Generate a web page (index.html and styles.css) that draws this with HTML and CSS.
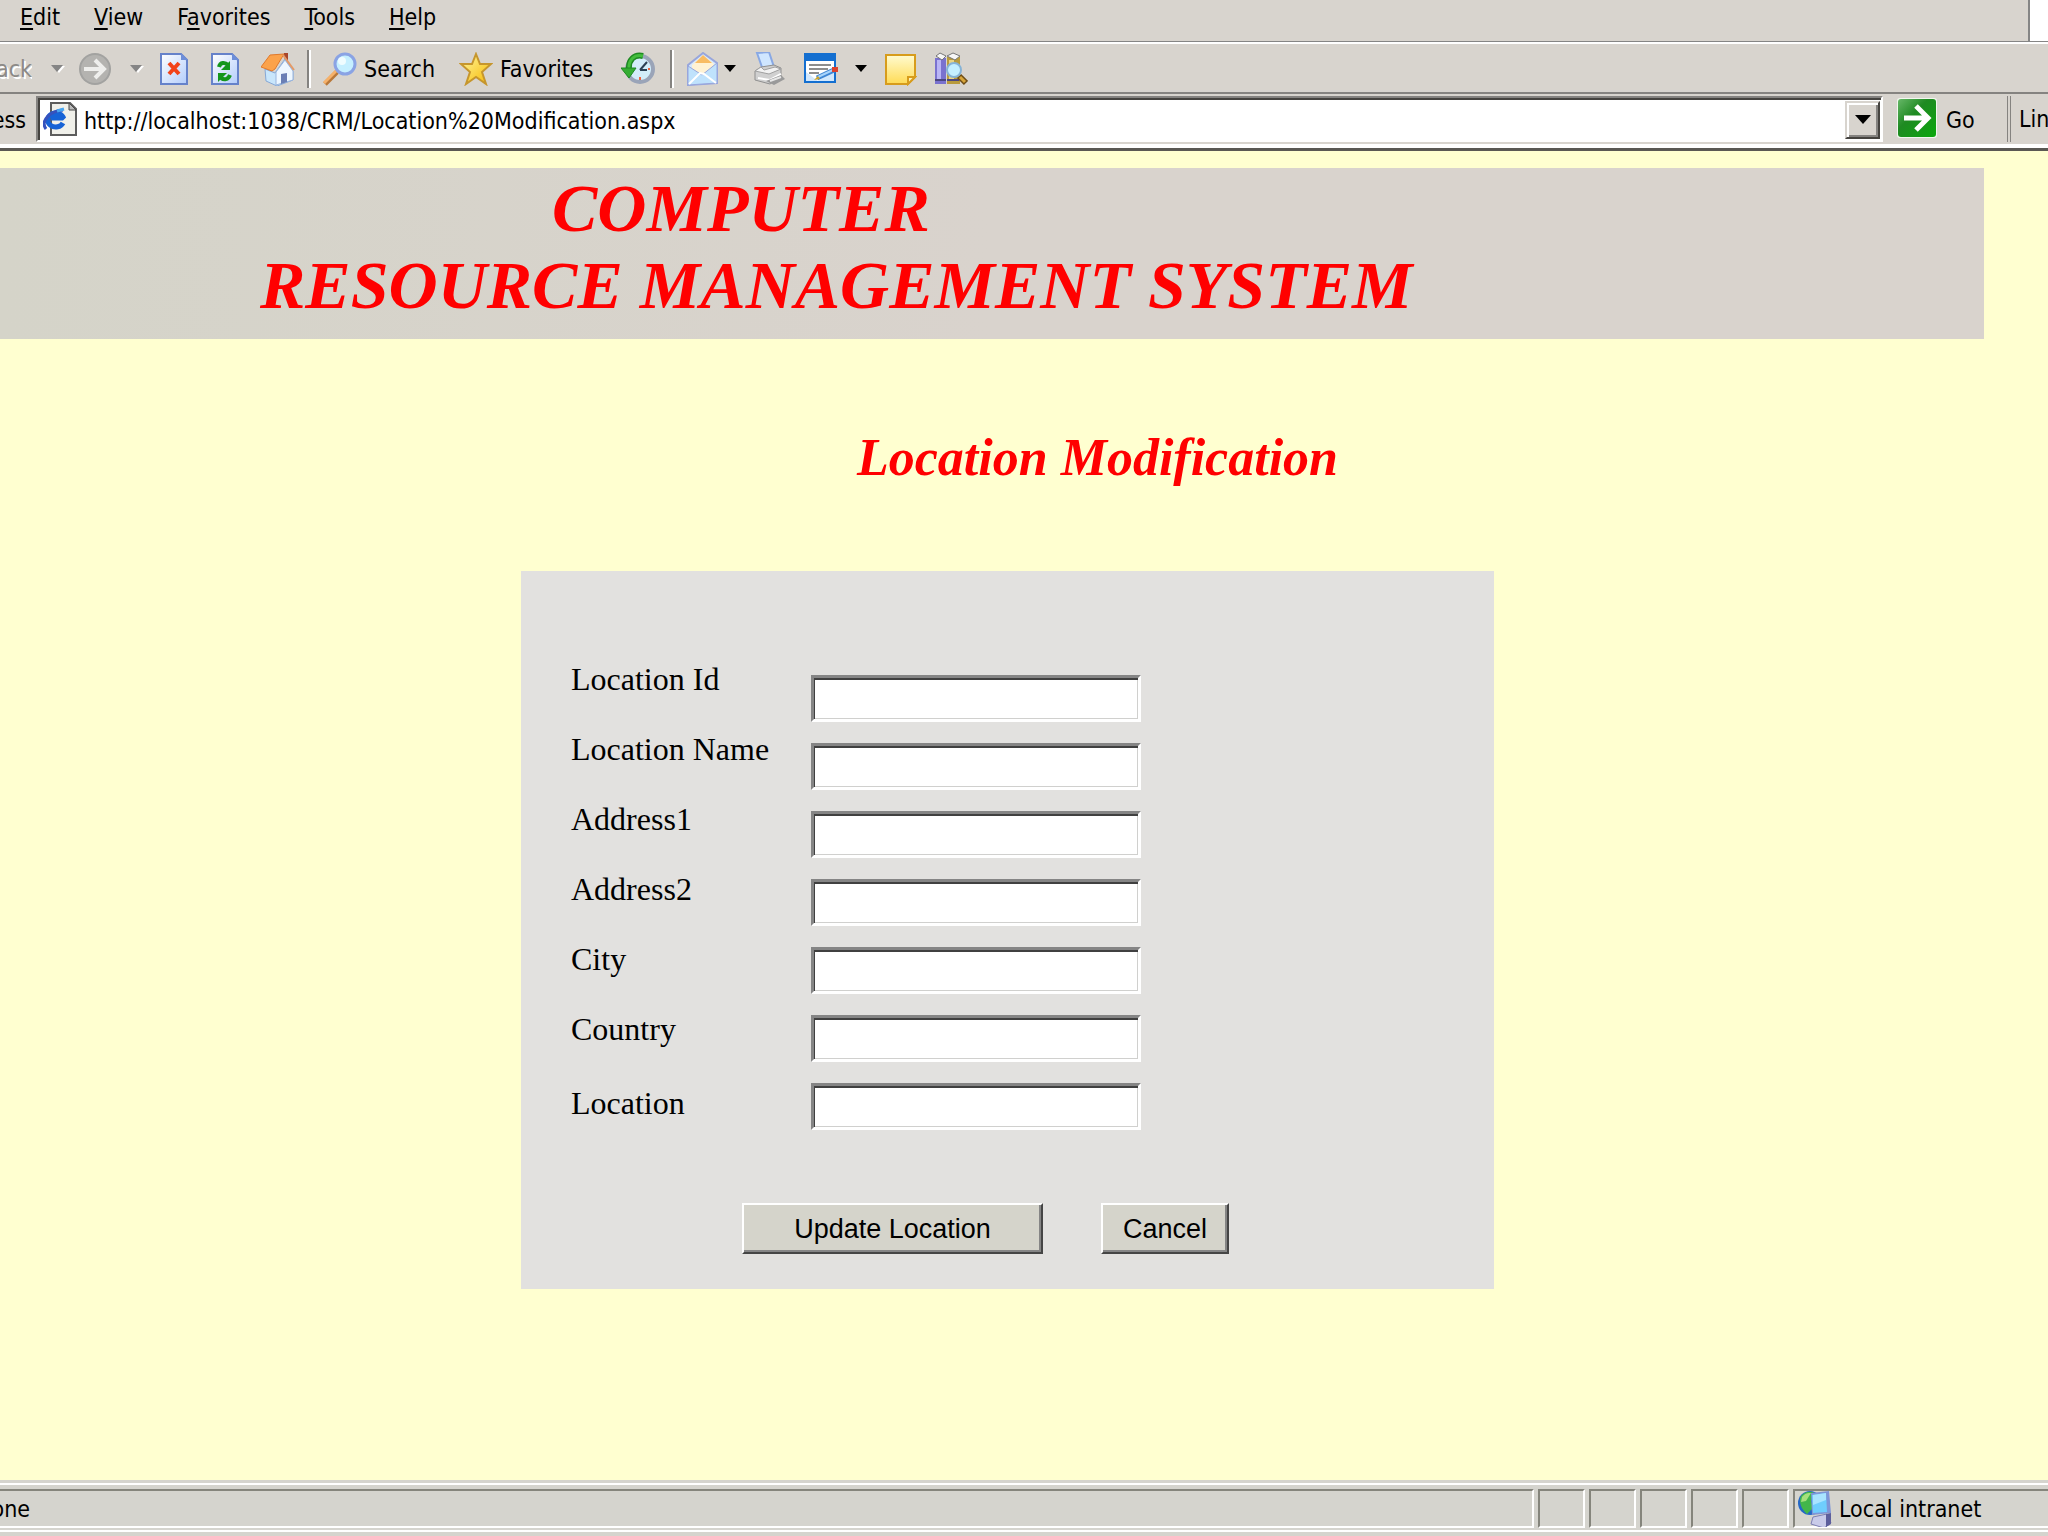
FILE: index.html
```html
<!DOCTYPE html>
<html lang="en">
<head>
<meta charset="utf-8">
<title>Location Modification</title>
<link rel="stylesheet" href="styles.css">
</head>
<body>
<header class="chrome">
  <div class="menu-row">
    <nav class="menu">
      <button type="button"><u>E</u>dit</button>
      <button type="button"><u>V</u>iew</button>
      <button type="button">F<u>a</u>vorites</button>
      <button type="button"><u>T</u>ools</button>
      <button type="button"><u>H</u>elp</button>
    </nav>
    <div class="throbber"></div>
  </div>

  <div class="toolbar">
    <button type="button" class="tool clip back" disabled><span>Back</span></button>
    <button type="button" class="tool drop drop-back" aria-label="Back history" disabled><svg class="caret" viewBox="0 0 14 8"><path d="M3 1h12l-6 7z" fill="#fff"/><path d="M1 0h12L7 7z" fill="#858585"/></svg></button>
    <button type="button" class="tool forward" aria-label="Forward" disabled>
      <svg viewBox="0 0 34 34"><circle cx="17" cy="17" r="16" fill="#a2a2a0"/><circle cx="17" cy="17" r="14" fill="#b4b3b0"/><path d="M6 17h20M17 8l9 9-9 9" fill="none" stroke="#eeeeec" stroke-width="4"/></svg>
    </button>
    <button type="button" class="tool drop drop-forward" aria-label="Forward history" disabled><svg class="caret" viewBox="0 0 14 8"><path d="M3 1h12l-6 7z" fill="#fff"/><path d="M1 0h12L7 7z" fill="#858585"/></svg></button>
    <button type="button" class="tool stop" aria-label="Stop">
      <svg viewBox="0 0 34 34"><defs><linearGradient id="paper" x1="0" y1="0" x2="1" y2="1"><stop offset="0" stop-color="#fff"/><stop offset="1" stop-color="#b3cdfb"/></linearGradient></defs><path d="M4 2h20l6 6v24H4z" fill="url(#paper)" stroke="#6682ca" stroke-width="2"/><path d="M24 1v7h7z" fill="#6e8ed8"/><path d="M12 11l10 11M22 11L12 22" stroke="#f2431a" stroke-width="4"/></svg>
    </button>
    <button type="button" class="tool refresh" aria-label="Refresh">
      <svg viewBox="0 0 34 34"><path d="M4 2h20l6 6v24H4z" fill="url(#paper)" stroke="#6682ca" stroke-width="2"/><path d="M24 1v7h7z" fill="#6e8ed8"/><path d="M11 15c1-5 6-5 9-2" fill="none" stroke="#14961c" stroke-width="4"/><path d="M22 9v9h-9z" fill="#14961c"/><path d="M22 23c-2 5-6 5-9 3" fill="none" stroke="#14961c" stroke-width="4"/><path d="M10 30v-9h9z" fill="#14961c"/></svg>
    </button>
    <button type="button" class="tool home" aria-label="Home">
      <svg viewBox="0 0 34 34"><path d="M23 1h4v9l-4-4z" fill="#a8452a"/><path d="M4 17l10 4 10-14 8 12v9l-16 6-11-5z" fill="#c9e6fb" stroke="#86a8d6"/><path d="M15 20L24 8l8 11v9l-17 5z" fill="#eef7ff" stroke="#9ab5dd"/><path d="M20 22l6-1v9l-6 2z" fill="#6b7fb5"/><path d="M0 15L9 3l14-1-9 15-3 2z" fill="#fba24b" stroke="#e0792b"/><path d="M22 3l11 15" stroke="#e59a66" stroke-width="2"/></svg>
    </button>
    <span class="sep"></span>
    <button type="button" class="tool search">
      <svg viewBox="0 0 34 34"><path d="M2 32l12-12" stroke="#b97839" stroke-width="5"/><path d="M1 31l12-12" stroke="#f6b16a" stroke-width="3"/><circle cx="22" cy="12" r="10" fill="#c5efff" stroke="#8aa3e4" stroke-width="3"/><circle cx="19" cy="9" r="4" fill="#effcff"/></svg>
      <span>Search</span>
    </button>
    <button type="button" class="tool favorites">
      <svg viewBox="0 0 34 34"><defs><linearGradient id="gold" x1="0" y1="0" x2="1" y2="1"><stop offset="0" stop-color="#fff7a0"/><stop offset="1" stop-color="#f6b800"/></linearGradient></defs><path d="M17 2l4 10h11l-9 8 4 12-10-7-10 7 4-12-9-8h11z" fill="url(#gold)" stroke="#c6962d" stroke-width="2"/></svg>
      <span>Favorites</span>
    </button>
    <button type="button" class="tool history" aria-label="History">
      <svg viewBox="0 0 34 34"><circle cx="19" cy="17" r="13" fill="#d3edfa" stroke="#9aa4b8" stroke-width="4"/><path d="M19 18l7-8M19 18h7" stroke="#2c4054" stroke-width="2"/><path d="M19 28v-3M29 17h-2" stroke="#ee6540" stroke-width="2"/><path d="M22 4C13 2 7 8 8 18" fill="none" stroke="#1e8a22" stroke-width="6"/><path d="M22 4C13 2 7 8 8 18" fill="none" stroke="#43bd3d" stroke-width="3"/><path d="M0 16h15l-7 10z" fill="#35ad33" stroke="#1e8a22"/></svg>
    </button>
    <span class="sep sep-mail"></span>
    <button type="button" class="tool mail" aria-label="Mail">
      <svg viewBox="0 0 34 34"><path d="M2 13L17 1l14 10v20L2 33z" fill="#d6e9fd" stroke="#98a6dc" stroke-width="2"/><path d="M6 13L17 3l11 9-3 7-10 3-9-5z" fill="#fff2d4"/><path d="M9 11l8-8 9 8z" fill="#f8bc64"/><path d="M2 14l14 9 15-12v20L2 33z" fill="#bfe2fc" stroke="#98a6dc" stroke-width="1"/><path d="M3 32l11-11 4 1 12 9" fill="none" stroke="#fff" stroke-width="2"/></svg>
    </button>
    <button type="button" class="tool drop drop-mail" aria-label="Mail options"><svg class="caret" viewBox="0 0 14 8"><path d="M1 0h12L7 7z"/></svg></button>
    <button type="button" class="tool printer" aria-label="Print">
      <svg viewBox="0 0 34 34"><path d="M4 1l12-1 5 15-11 3z" fill="#cfe6ff" stroke="#88a8e4" stroke-width="2"/><path d="M2 19l6-4 13-2 7 3v9l-11 7-15-4z" fill="#d0d0d0" stroke="#8f8f8f"/><path d="M2 19l6-4 3 3 11-3 6 2-12 5z" fill="#f2f2f2" stroke="#a0a0a0"/><path d="M5 26l12 2 11-6" fill="none" stroke="#fff" stroke-width="2"/><path d="M13 29l15-6 4 4-11 6z" fill="#9a9a9a"/><path d="M17 29l11-4" stroke="#e8e8e8" stroke-width="2"/></svg>
    </button>
    <button type="button" class="tool edit" aria-label="Edit page">
      <svg viewBox="0 0 34 34"><path d="M1 3h30v27H1z" fill="#fff" stroke="#146fd0" stroke-width="2"/><path d="M0 1h32v8H0z" fill="#146fd0"/><path d="M2 20l12 9H2zM14 29l16-10v10z" fill="#d2e8fd"/><path d="M5 13h22M5 17h19M5 21h10" stroke="#8d8d8d" stroke-width="2"/><path d="M13 26l17-8" stroke="#3f86d4" stroke-width="5"/><path d="M14 25l15-7" stroke="#a8d4fb" stroke-width="2"/><path d="M28 15h6v5h-6z" fill="#dc4430"/><path d="M10 28l4-4 2 3z" fill="#caa32d"/></svg>
    </button>
    <button type="button" class="tool drop drop-edit" aria-label="Edit options"><svg class="caret" viewBox="0 0 14 8"><path d="M1 0h12L7 7z"/></svg></button>
    <button type="button" class="tool note" aria-label="Discuss">
      <svg viewBox="0 0 34 34"><defs><linearGradient id="sticky" x1="0" y1="0" x2="0" y2="1"><stop offset="0" stop-color="#fffbd0"/><stop offset="1" stop-color="#ffdb55"/></linearGradient></defs><path d="M3 3h29v22l-7 7H3z" fill="url(#sticky)" stroke="#d79c1c" stroke-width="2"/><path d="M32 25h-7v7z" fill="#fff3b4" stroke="#d79c1c" stroke-width="2"/></svg>
    </button>
    <button type="button" class="tool research" aria-label="Research">
      <svg viewBox="0 0 34 34"><path d="M1 6h11v26H1z" fill="#7a72cf"/><path d="M3 8h4v21H3z" fill="#b9b5f5"/><path d="M13 5h13v27H13z" fill="#b99b3c"/><path d="M15 8h5v20h-5z" fill="#ead584"/><path d="M2 4l4-3 6 3-4 4zM13 4l6-3 7 3-5 4z" fill="#f7f7f7" stroke="#777"/><path d="M1 28h11M13 28h12" stroke="#4c4780" stroke-width="2"/><path d="M25 24l7 7" stroke="#6e4d16" stroke-width="6"/><path d="M26 25l5 5" stroke="#d8a53a" stroke-width="3"/><circle cx="20" cy="18" r="7" fill="#c4efff" stroke="#86b3d6" stroke-width="2"/></svg>
    </button>
  </div>

  <form class="address-row">
    <label class="clip address-label" for="url"><span>Address</span></label>
    <div class="combo">
      <svg class="page-icon" viewBox="0 0 34 34"><path d="M8 1h19l6 6v26H8z" fill="#f0f0ea" stroke="#5d5d5d" stroke-width="2"/><path d="M26 1v7h7z" fill="#bbb" stroke="#4a4a4a"/><path d="M20 21a8 7 0 1 1 0-6l-1 1H8" fill="none" stroke="#1763d6" stroke-width="5"/><path d="M3 27C-3 19 7 9 20 8" fill="none" stroke="#3652bd" stroke-width="3"/><path d="M14 9l7-2" stroke="#47a5f0" stroke-width="3"/></svg>
      <input id="url" class="url" type="text" value="http://localhost:1038/CRM/Location%20Modification.aspx">
      <button type="button" class="combo-button" aria-label="Show addresses"><svg viewBox="0 0 16 10"><path d="M0 0h16L8 9z"/></svg></button>
    </div>
    <button type="button" class="go">
      <svg viewBox="0 0 42 42"><defs><linearGradient id="green" x1="0" y1="0" x2="1" y2="1"><stop offset="0" stop-color="#67b768"/><stop offset=".4" stop-color="#1f8a22"/><stop offset="1" stop-color="#0aa80c"/></linearGradient></defs><rect x="1" y="1" width="40" height="40" rx="3" fill="#f1f7ee"/><rect x="2" y="2" width="38" height="38" rx="3" fill="url(#green)"/><path d="M8 21h22M20 9l12 12-12 12" fill="none" stroke="#fff" stroke-width="5"/></svg>
      <span>Go</span>
    </button>
    <button type="button" class="links">Links</button>
  </form>
</header>

<main class="page">
  <h1 class="banner"><span class="banner-top">COMPUTER</span><span class="banner-bottom">RESOURCE MANAGEMENT SYSTEM</span></h1>
  <h2 class="title">Location Modification</h2>
  <form class="panel">
    <div class="fields">
      <div class="labels">
        <label for="location-id">Location Id</label>
        <label for="location-name">Location Name</label>
        <label for="address1">Address1</label>
        <label for="address2">Address2</label>
        <label for="city">City</label>
        <label for="country">Country</label>
        <label for="location">Location</label>
      </div>
      <div class="inputs">
        <input id="location-id" type="text">
        <input id="location-name" type="text">
        <input id="address1" type="text">
        <input id="address2" type="text">
        <input id="city" type="text">
        <input id="country" type="text">
        <input id="location" type="text">
      </div>
    </div>
    <div class="actions">
      <button type="button" class="update">Update Location</button>
      <button type="button" class="cancel">Cancel</button>
    </div>
  </form>
</main>

<footer class="status">
  <div class="pane message"><span class="clip"><span>Done</span></span></div>
  <div class="pane"></div>
  <div class="pane"></div>
  <div class="pane"></div>
  <div class="pane"></div>
  <div class="pane"></div>
  <div class="pane zone">
    <svg viewBox="0 0 34 36"><circle cx="12" cy="12" r="12" fill="#2468c6"/><path d="M3 5c4-5 10-5 13-3l-3 8 2 7-6 6C4 19 0 11 3 5z" fill="#43b64b"/><path d="M4 6c3-4 6-4 9-4l-5 8-5 1z" fill="#a6e07c"/><path d="M13 2l18-2 2 22-19 2z" fill="#7f95d6"/><path d="M14 4l14-2 1 19-14 1z" fill="#6fcdfd"/><path d="M15 4l13-2v7l-13 5z" fill="#a9e4ff"/><path d="M15 26l14-3 4 9-7 5-13-4z" fill="#c9cbe9" stroke="#7d7fb4"/><path d="M28 23l5-1v11l-5 3z" fill="#5d5f9c"/></svg>
    <span>Local intranet</span>
  </div>
</footer>
</body>
</html>
```

FILE: styles.css
```css
* { box-sizing: border-box; }

body {
  margin: 0;
  min-height: 100vh;
  display: flex;
  flex-direction: column;
  overflow-x: hidden;
  background: #ffffd0;
  color: #000;
  font: 23px/28px "DejaVu Sans Condensed", "Noto Sans", sans-serif;
}

button, input { font: inherit; color: inherit; border-radius: 0; }
button { padding: 0; border: 0; background: none; white-space: nowrap; }
svg { display: block; flex: none; }

/* Text that runs off the left edge of the window */
.clip { display: flex; justify-content: flex-end; overflow: hidden; flex: none; }
.clip span { flex: none; }

/* Browser bars */
.chrome {
  background: #d8d4ce;
  border-bottom: 3px solid #5a5853;
  overflow: hidden;
}

.menu-row {
  display: flex;
  height: 44px;
  border-bottom: 2px solid #fff;
}
.menu {
  flex: 1;
  display: flex;
  align-items: flex-start;
  gap: 34px;
  padding: 3px 0 0 20px;
  border-right: 2px solid #858585;
  border-bottom: 1px solid #858585;
}
.menu u { text-underline-offset: 3px; text-decoration-thickness: 2px; }
.throbber {
  width: 18px;
  background: #fff;
  border-bottom: 1px solid #858585;
}

.toolbar {
  display: flex;
  align-items: center;
  height: 50px;
  padding-top: 2px;
  border-bottom: 2px solid #858380;
}
.tool { display: flex; align-items: center; gap: 7px; flex: none; }
.tool svg { width: 34px; height: 34px; }
.tool svg.caret { width: 14px; height: 8px; overflow: visible; }
.back { width: 32px; color: #8c8a87; text-shadow: 2px 2px #fff; }
.drop-back { margin-left: 18px; }
.forward { margin-left: 14px; }
.drop-forward { margin-left: 17px; }
.stop { margin-left: 14px; }
.refresh { margin-left: 17px; }
.home { margin-left: 19px; }
.sep {
  width: 4px;
  height: 38px;
  margin: 0 12px;
  border-left: 2px solid #858380;
  border-right: 2px solid #fff;
}
.favorites { margin-left: 24px; }
.history { margin-left: 28px; }
.sep-mail { margin-left: 15px; }
.drop-mail { margin-left: 3px; }
.printer { margin-left: 16px; }
.edit { margin-left: 17px; }
.drop-edit { margin-left: 16px; }
.note { margin-left: 15px; }
.research { margin-left: 17px; }

.address-row {
  display: flex;
  height: 54px;
  padding-top: 2px;
  border-bottom: 4px solid #fff;
}
.address-label { width: 26px; padding-top: 10px; }
.combo {
  flex: 1;
  display: flex;
  height: 46px;
  margin-left: 10px;
  padding: 1px;
  background: #fff;
  border: 2px solid;
  border-color: #858380 #fff #fff #858380;
  box-shadow: inset 2px 2px #45433f;
}
.page-icon { width: 34px; height: 34px; margin: 3px 0 0 4px; }
.url {
  flex: 1;
  min-width: 0;
  margin: 4px 0 0 7px;
  padding: 0;
  border: 0;
  background: none;
  outline: 0;
}
.combo-button {
  width: 35px;
  height: 38px;
  margin-top: 2px;
  background: #d8d4ce;
  border: 2px solid;
  border-color: #d8d4ce #45433f #45433f #d8d4ce;
  box-shadow: inset 2px 2px #fff, inset -2px -2px #858380;
}
.combo-button svg { width: 16px; height: 10px; margin: 0 auto; }
.go { display: flex; gap: 8px; padding: 1px 0 0 13px; width: 124px; }
.go svg { width: 42px; height: 42px; }
.go span { padding-top: 9px; }
.links {
  width: 41px;
  height: 46px;
  padding: 0 0 0 8px;
  text-align: left;
  border-left: 4px double #858380;
  overflow: hidden;
}

/* Web page */
.page { flex: 1; padding-top: 17px; }

.banner {
  display: flex;
  flex-direction: column;
  align-items: flex-start;
  margin: 0 64px 0 0;
  padding: 2px 0 15px;
  background: linear-gradient(90deg, #d5d4c9, #d9d3cd 50%);
  color: #f00;
  font: italic bold 68px/77px "Liberation Serif", serif;
  white-space: nowrap;
}
.banner-top { margin-left: 552px; }
.banner-bottom { margin-left: 260px; }

.title {
  margin: 89px 0 83px 857px;
  color: #f00;
  font: italic bold 52px/60px "Liberation Serif", serif;
  white-space: nowrap;
}

.panel {
  width: 47.5%;
  min-height: 718px;
  margin-left: 521px;
  padding: 0 0 35px 50px;
  background: #e2e1df;
}
.fields { display: flex; align-items: flex-start; }
.labels {
  display: grid;
  grid-auto-rows: 70px;
  width: 240px;
  padding-top: 90px;
  font: 32px/36px "Liberation Serif", serif;
}
.labels label:last-child { padding-top: 4px; }
.inputs { display: grid; gap: 21px; padding-top: 104px; }
.inputs input {
  width: 330px;
  height: 47px;
  padding: 0 4px;
  background: #fff;
  border: 3px solid;
  border-color: #858585 #fff #fff #858585;
  box-shadow: inset 1px 2px #404040, inset -1px -1px #d0d0ce;
}
.actions { display: flex; gap: 58px; padding: 52px 0 0 171px; }
.actions button {
  height: 51px;
  background: #d5d4cb;
  border: 2px solid;
  border-color: #fff #454545 #454545 #fff;
  box-shadow: inset -2px -2px #858585;
  font: 27px/32px "Liberation Sans", sans-serif;
}
.update { width: 301px; }
.cancel { width: 128px; }

/* Status bar */
.status {
  display: flex;
  gap: 4px;
  height: 56px;
  padding-top: 6px;
  background:
    linear-gradient(#fff, #fff) 0 3px / 100% 2px no-repeat,
    linear-gradient(#fff, #fff) 0 50px / 100% 2px no-repeat,
    #d5d4ce;
}
.pane {
  width: 47px;
  height: 39px;
  margin-top: 3px;
  border: 2px solid;
  border-color: #85857c #fff #fff #85857c;
}
.message { flex: 1; border-left: 0; padding-top: 4px; }
.message .clip { width: 30px; }
.zone {
  display: flex;
  gap: 7px;
  width: 255px;
  padding-left: 3px;
  border-right: 0;
  white-space: nowrap;
}
.zone svg { width: 34px; height: 36px; }
.zone span { padding-top: 4px; }
```
